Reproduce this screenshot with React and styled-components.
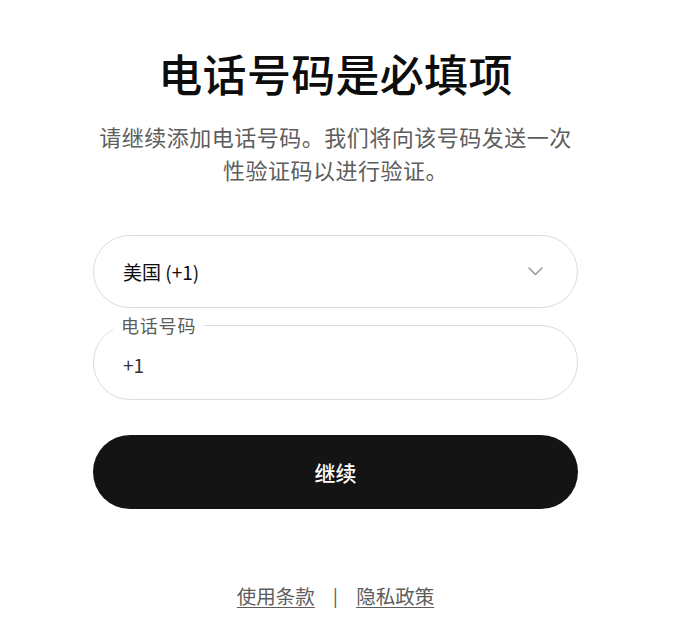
import React from "react";
import styled, { createGlobalStyle } from "styled-components";

const Global = createGlobalStyle`
  html, body { margin: 0; padding: 0; background: #fff; }
  body { font-family: "Noto Sans CJK SC", "Noto Sans", "Liberation Sans", sans-serif; }
  * { box-sizing: border-box; }
`;

const Page = styled.main`
  width: 671px;
  padding-top: 47px;
  display: flex;
  flex-direction: column;
  align-items: center;
`;

const Content = styled.div`
  width: 485px;
  display: flex;
  flex-direction: column;
  align-items: stretch;
`;

const Title = styled.h1`
  margin: 0;
  font-size: 44px;
  line-height: 52px;
  font-weight: 500;
  color: #0d0d0d;
  text-align: center;
  letter-spacing: 0.3px;
`;

const Subtitle = styled.p`
  margin: 21px 0 0;
  font-size: 22px;
  line-height: 33px;
  letter-spacing: 0.5px;
  color: #5d5d5d;
  text-align: center;
`;

const Select = styled.button`
  margin-top: 49px;
  height: 73px;
  border: 1px solid #dcdcdc;
  border-radius: 37px;
  background: #fff;
  padding: 0 34px 0 29px;
  display: flex;
  align-items: center;
  justify-content: space-between;
  font-family: inherit;
  font-size: 19px;
  font-weight: 400;
  color: #0d0d0d;
  cursor: pointer;
`;

const Field = styled.fieldset`
  margin: 5px 0 0;
  padding: 0 0 8px 0;
  border: 1px solid #dcdcdc;
  border-radius: 37px;
  min-width: 0;
`;

const Legend = styled.legend`
  margin-left: 19px;
  padding: 0 8px;
  font-size: 18px;
  line-height: 24px;
  color: #5d5d5d;
  letter-spacing: 0.8px;
`;

const Input = styled.input`
  display: block;
  width: 100%;
  height: 54px;
  border: none;
  outline: none;
  background: transparent;
  padding: 0 29px;
  font-family: inherit;
  font-size: 19px;
  color: #333;
`;

const Primary = styled.button`
  margin-top: 35px;
  height: 74px;
  border: none;
  border-radius: 37px;
  background: #141414;
  color: #fff;
  font-family: inherit;
  font-size: 21px;
  font-weight: 500;
  cursor: pointer;
`;

const Footer = styled.footer`
  margin-top: 75px;
  display: flex;
  justify-content: center;
  align-items: center;
  font-size: 19.5px;
  line-height: 24px;
  color: #5d5d5d;
`;

const FooterLink = styled.a`
  color: #5d5d5d;
  text-decoration: underline;
  text-underline-offset: 3px;
  text-decoration-thickness: 1px;
`;

const Sep = styled.span`
  margin: 0 18px;
  color: #5d5d5d;
`;

const Chevron = () => (
  <svg width="15" height="9" viewBox="0 0 15 9" fill="none">
    <path d="M1 1l6.5 6.5L14 1" stroke="#9a9a9a" strokeWidth="1.6" strokeLinecap="round" strokeLinejoin="round" />
  </svg>
);

export default function App() {
  return (
    <>
      <Global />
      <Page>
        <Content>
          <Title>电话号码是必填项</Title>
          <Subtitle>请继续添加电话号码。我们将向该号码发送一次性验证码以进行验证。</Subtitle>
          <Select type="button">
            <span>美国 (+1)</span>
            <Chevron />
          </Select>
          <Field>
            <Legend>电话号码</Legend>
            <Input defaultValue="+1" />
          </Field>
          <Primary type="button">继续</Primary>
          <Footer>
            <FooterLink href="#">使用条款</FooterLink>
            <Sep>|</Sep>
            <FooterLink href="#">隐私政策</FooterLink>
          </Footer>
        </Content>
      </Page>
    </>
  );
}
